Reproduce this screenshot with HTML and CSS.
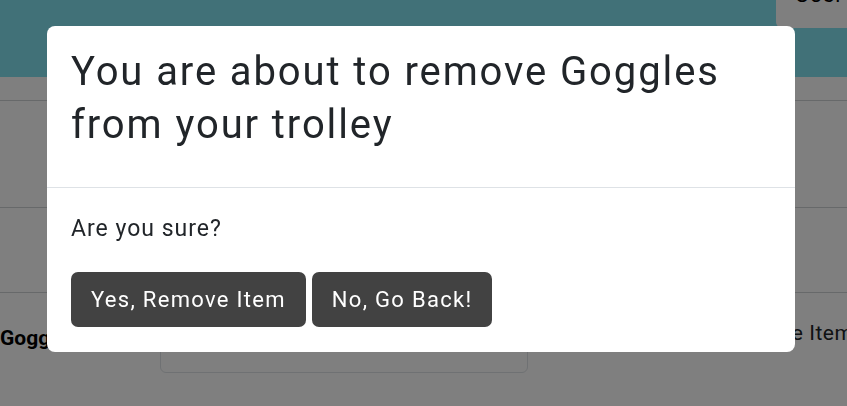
FILE: index.html
```html
<!DOCTYPE html>
<html lang="en">
<head>
<meta charset="utf-8">
<title>Trolley</title>
<link rel="stylesheet" href="styles.css">
</head>
<body>
<div class="page">
  <header class="nav">
    <button class="user-btn">User</button>
  </header>
  <div class="row row-head"></div>
  <div class="row row-a"></div>
  <div class="row row-b"></div>
  <div class="row row-item">
    <div class="item-name">Goggles</div>
    <div class="item-card"><span class="qty">1</span></div>
    <div class="item-action">Remove Item</div>
  </div>
</div>

<div class="backdrop"></div>

<div class="modal" role="dialog" aria-modal="true">
  <div class="modal-header">
    <h2 class="modal-title">You are about to remove Goggles from your trolley</h2>
  </div>
  <div class="modal-body">
    <p class="question">Are you sure?</p>
    <div class="actions">
      <button class="btn">Yes, Remove Item</button>
      <button class="btn">No, Go Back!</button>
    </div>
  </div>
</div>
</body>
</html>
```

FILE: styles.css
```css
* { box-sizing: border-box; }
html, body { margin: 0; padding: 0; }
body {
  width: 847px;
  height: 406px;
  overflow: hidden;
  background: #ffffff;
  font-family: Roboto, "Liberation Sans", sans-serif;
  color: #212529;
}

.nav {
  height: 77px;
  background: #82e2f0;
  display: flex;
  justify-content: flex-end;
  align-items: flex-start;
}
.user-btn {
  width: 71px;
  height: 28px;
  border: none;
  background: #ffffff;
  border-radius: 0 0 0 6px;
  font-family: inherit;
  font-size: 22px;
  letter-spacing: 1px;
  color: #000;
  line-height: 1;
  padding: 0 0 22px 19px;
  text-align: left;
  display: flex;
  align-items: flex-end;
  overflow: hidden;
}

.row { border-bottom: 1px solid #cfd2d4; }
.row-head { height: 24px; }
.row-a { height: 107px; }
.row-b { height: 85px; }

.row-item {
  border-bottom: none;
  display: grid;
  grid-template-columns: 160px 368px 1fr;
  align-items: start;
  padding-top: 17px;
}
.item-name {
  font-weight: 700;
  font-size: 21px;
  color: #000;
  margin-top: 16px;
}
.item-card {
  height: 63px;
  border: 1px solid #dee2e6;
  border-radius: 6px;
  padding: 18px 0 0 18px;
  font-size: 20px;
}
.item-action {
  font-size: 21px;
  line-height: 32px;
  letter-spacing: 0.5px;
  margin-top: 7px;
  margin-left: 197px;
  white-space: nowrap;
}

.backdrop {
  position: fixed;
  inset: 0;
  background: rgba(0, 0, 0, 0.5);
}

.modal {
  position: fixed;
  top: 26px;
  left: 47px;
  width: 748px;
  background: #ffffff;
  border-radius: 8px;
  overflow: hidden;
}
.modal-header {
  padding: 19px 24px 36px;
  border-bottom: 1px solid #dee2e6;
}
.modal-title {
  margin: 0;
  font-size: 40px;
  font-weight: 400;
  line-height: 53px;
  letter-spacing: 1.9px;
  color: #212529;
}
.modal-body {
  padding: 24px 24px 25px;
}
.question {
  margin: 0 0 26px;
  font-size: 23px;
  line-height: 34px;
  letter-spacing: 1px;
}
.actions {
  display: flex;
  gap: 6px;
}
.btn {
  height: 55px;
  padding: 0 20px;
  border: none;
  border-radius: 7px;
  background: #424242;
  color: #ffffff;
  font-family: inherit;
  font-size: 22px;
  letter-spacing: 1.3px;
}
```
